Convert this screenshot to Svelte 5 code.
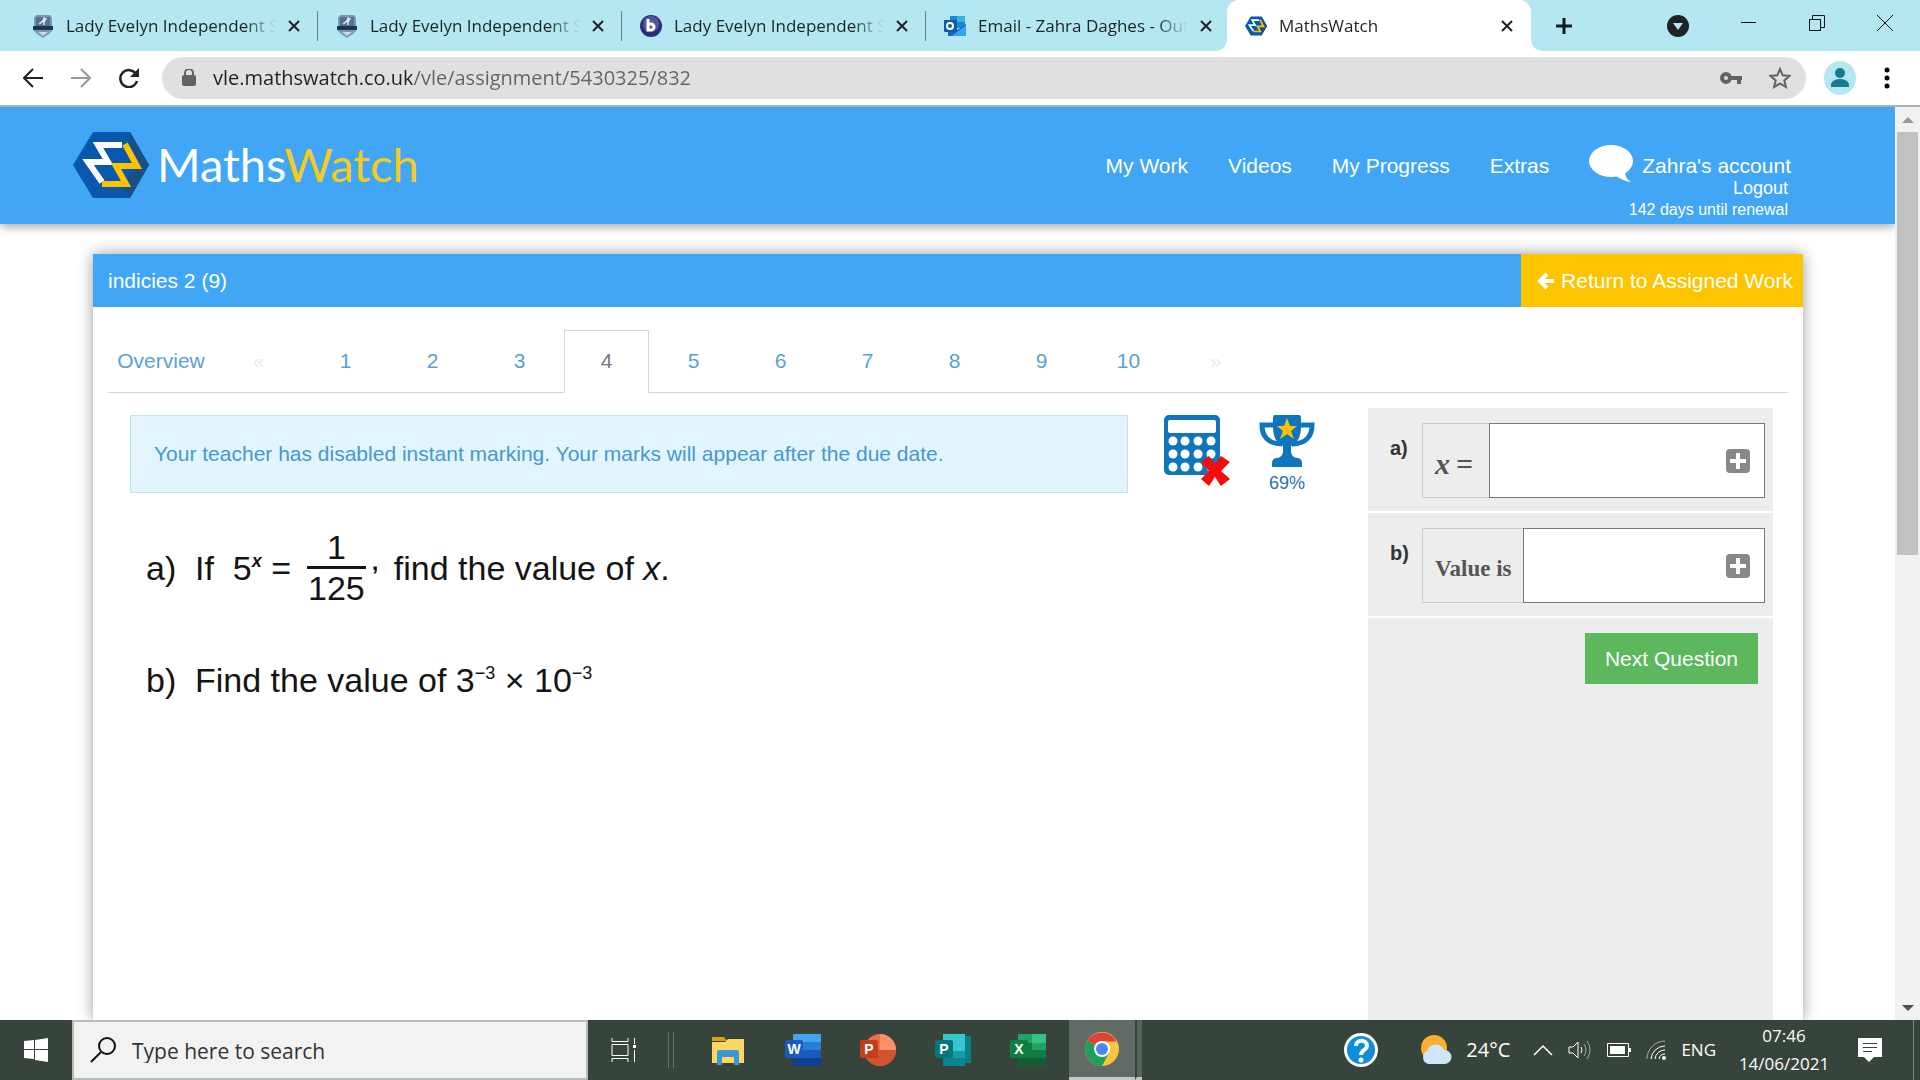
<script>
  const browserTabs = [
    { icon: 'crest', title: 'Lady Evelyn Independent School' },
    { icon: 'crest', title: 'Lady Evelyn Independent School' },
    { icon: 'bbb', title: 'Lady Evelyn Independent School' },
    { icon: 'outlook', title: 'Email - Zahra Daghes - Outlook' },
    { icon: 'maths', title: 'MathsWatch', active: true }
  ];

  const navLinks = ['My Work', 'Videos', 'My Progress', 'Extras'];
  const questions = [1, 2, 3, 4, 5, 6, 7, 8, 9, 10];
  const current = 4;

  const calcRows = [26, 39, 52];
  const calcCols = [9, 21, 34, 47];

  let url = 'vle.mathswatch.co.uk/vle/assignment/5430325/832';
  let search = '';
  let answerA = '';
  let answerB = '';
</script>

{#snippet mathsLogo()}
  <path d="M20 0h37l19 33-19 33H20L0 33z" fill="#0859ad" />
  <path d="M57 0l19 33-19 33-8-11 14-21-7-24z" fill="#174f86" />
  <path d="M49 13H25l10 17H15l14 20" fill="none" stroke="#fff" stroke-width="6" />
  <path d="M52 12l12 22H43l10 18H29" fill="none" stroke="#fdc300" stroke-width="6" />
{/snippet}

{#snippet officeBadge(letter, color)}
  <rect x="0" y="8" width="18" height="18" rx="2" fill={color} />
  <text x="9" y="22" class="badge-letter">{letter}</text>
{/snippet}

{#snippet plusIcon()}
  <svg width="24" height="24" viewBox="0 0 24 24">
    <rect width="24" height="24" rx="4" fill="#888" />
    <path d="M12 4v16M4 12h16" stroke="#fff" stroke-width="4" />
  </svg>
{/snippet}

<div class="screen">
  <div class="tab-strip">
    {#each browserTabs as tab}
      <div class="browser-tab" class:active={tab.active}>
        <svg class="favicon" width="22" height="24" viewBox="0 0 22 24">
          {#if tab.icon === 'crest'}
            <path d="M4 1h14l2 3v13l-3 3-6 4-6-4-3-3V4z" fill="#7c97ae" />
            <path d="M4 3h14v9H4z" fill="#55718d" />
            <path d="M1 12h20v4H1z" fill="#1d3453" />
            <path d="M6 18h10l-5 4z" fill="#c3d9e8" />
            <path d="M7 10l4-3 1-3 2 1-2 3v3" fill="none" stroke="#e4edf4" stroke-width="1.500" />
          {:else if tab.icon === 'bbb'}
            <circle cx="11" cy="12" r="11" fill="#2b2f7b" />
            <circle cx="11" cy="10" r="8" fill="#50559f" />
            <path d="M8 5v11h3a3 3 0 1 0 0-6H8" fill="none" stroke="#fff" stroke-width="3" />
          {:else if tab.icon === 'outlook'}
            <path d="M6 2h15v12H6z" fill="#1a86d9" />
            <path d="M13 2h8v6h-8z" fill="#35b1ea" />
            <path d="M4 12l9 4 9-6v12H4z" fill="#1467b8" />
            <path d="M22 11v11H8z" fill="#35a5e8" />
            <rect x="0" y="6" width="13" height="12" rx="1" fill="#0c5cab" />
            <circle cx="6" cy="12" r="3" fill="none" stroke="#fff" stroke-width="2" />
          {:else}
            <svg width="22" height="24" viewBox="0 -8 76 82">{@render mathsLogo()}</svg>
          {/if}
        </svg>
        <span class="tab-title">{tab.title}</span>
        <button class="icon-btn" aria-label="Close tab">
          <svg width="16" height="16" viewBox="0 0 16 16">
            <path d="M3 3l10 10M13 3L3 13" stroke="#1b2226" stroke-width="2" />
          </svg>
        </button>
      </div>
    {/each}
    <button class="icon-btn new-tab" aria-label="New tab">
      <svg width="18" height="18" viewBox="0 0 18 18">
        <path d="M9 1v16M1 9h16" stroke="#15191c" stroke-width="3" />
      </svg>
    </button>
    <div class="window-buttons">
      <button class="icon-btn" aria-label="Search tabs">
        <svg width="22" height="22" viewBox="0 0 22 22">
          <circle cx="11" cy="11" r="11" fill="#1f2326" />
          <path d="M6 8h10l-5 7z" fill="#b5e7f2" />
        </svg>
      </button>
      <button class="icon-btn" aria-label="Minimise">
        <svg width="16" height="16" viewBox="0 0 16 16"><path d="M0 7.500h15" stroke="#111" /></svg>
      </button>
      <button class="icon-btn" aria-label="Restore">
        <svg width="16" height="16" viewBox="0 0 16 16">
          <path d="M.5 4.500h11v11H.5zM3.500 4.500v-4h12v12h-4" fill="none" stroke="#111" />
        </svg>
      </button>
      <button class="icon-btn" aria-label="Close window">
        <svg width="16" height="16" viewBox="0 0 16 16"><path d="M0 0l16 16M16 0L0 16" stroke="#111" /></svg>
      </button>
    </div>
  </div>

  <div class="toolbar">
    <div class="history">
      <button class="icon-btn" aria-label="Back">
        <svg width="20" height="20" viewBox="0 0 20 20">
          <path d="M20 10H2M10 1l-9 9 9 9" fill="none" stroke="#222" stroke-width="2" />
        </svg>
      </button>
      <button class="icon-btn" aria-label="Forward">
        <svg width="20" height="20" viewBox="0 0 20 20">
          <path d="M0 10h18M10 1l9 9-9 9" fill="none" stroke="#999" stroke-width="2" />
        </svg>
      </button>
      <button class="icon-btn" aria-label="Reload">
        <svg width="20" height="20" viewBox="0 0 20 20">
          <path d="M17 6a8.500 8.500 0 1 0 1 7" fill="none" stroke="#222" stroke-width="2.500" />
          <path d="M20 0v9h-9z" fill="#222" />
        </svg>
      </button>
    </div>
    <div class="omnibox">
      <svg width="14" height="18" viewBox="0 0 14 18">
        <rect y="6" width="14" height="11" rx="2" fill="#5f6368" />
        <path d="M3 7V4a4 4 0 0 1 8 0v3" fill="none" stroke="#5f6368" stroke-width="2" />
      </svg>
      <input class="url" type="text" aria-label="Address" bind:value={url} />
      <button class="icon-btn" aria-label="Passwords">
        <svg width="22" height="14" viewBox="0 0 22 14">
          <circle cx="6" cy="7" r="4" fill="none" stroke="#5f6368" stroke-width="4" />
          <path d="M10 5h12v4h-1v4h-4V9h-7z" fill="#5f6368" />
        </svg>
      </button>
      <button class="icon-btn" aria-label="Bookmark">
        <svg width="22" height="22" viewBox="0 0 22 22">
          <path d="M11 2l2.700 6.300 6.800.6-5.200 4.500 1.600 6.600-5.900-3.500L5.100 20l1.600-6.600L1.500 8.900l6.800-.6z" fill="none" stroke="#5f6368" stroke-width="2" />
        </svg>
      </button>
    </div>
    <button class="icon-btn profile" aria-label="Profile">
      <svg width="32" height="34" viewBox="0 0 32 34">
        <ellipse cx="16" cy="17" rx="16" ry="17" fill="#b5e7f2" />
        <circle cx="16" cy="12" r="5" fill="#147a8c" />
        <path d="M7 26v-2c0-4 5-6 9-6s9 2 9 6v2z" fill="#147a8c" />
      </svg>
    </button>
    <button class="icon-btn" aria-label="Menu">
      <svg width="6" height="22" viewBox="0 0 6 22">
        <circle cx="3" cy="3" r="2.500" /><circle cx="3" cy="11" r="2.500" /><circle cx="3" cy="19" r="2.500" />
      </svg>
    </button>
  </div>

  <div class="viewport">
    <div class="page">
      <header>
        <a class="brand" href="#home">
          <svg width="76" height="66" viewBox="0 0 76 66">{@render mathsLogo()}</svg>
          <span>Maths<b>Watch</b></span>
        </a>
        <nav>
          {#each navLinks as link}
            <a href="#{link}">{link}</a>
          {/each}
          <div class="account">
            <a class="account-link" href="#account">
              <svg width="44" height="38" viewBox="0 0 44 38">
                <ellipse cx="22" cy="16" rx="22" ry="16" fill="#fff" />
                <path d="M22 30c6 0 10 6 20 7-5-3-6-7-6-12z" fill="#fff" />
              </svg>
              Zahra's account
            </a>
            <a class="logout" href="#logout">Logout</a>
            <span class="renewal">142 days until renewal</span>
          </div>
        </nav>
      </header>

      <main>
        <div class="card-head">
          <span>indicies 2 (9)</span>
          <a class="return" href="#assigned">
            <svg width="18" height="18" viewBox="0 0 18 18">
              <path d="M17 9H4M10 2L3 9l7 7" fill="none" stroke="#fff" stroke-width="4" />
            </svg>
            Return to Assigned Work
          </a>
        </div>

        <div class="question-tabs">
          <a class="overview" href="#overview">Overview</a>
          <span class="step">«</span>
          {#each questions as n}
            <a href="#q{n}" class:current={n === current}>{n}</a>
          {/each}
          <span class="step">»</span>
        </div>

        <div class="work">
          <section class="question">
            <div class="info">
              <p class="alert">Your teacher has disabled instant marking. Your marks will appear after the due date.</p>
              <svg width="66" height="72" viewBox="0 0 66 72">
                <rect width="56" height="60" rx="5" fill="#0f75bd" />
                <rect x="4" y="5" width="48" height="13" rx="2" fill="#fff" />
                {#each calcRows as y}
                  {#each calcCols as x}
                    <circle cx={x} cy={y} r="4.500" fill="#fff" />
                  {/each}
                {/each}
                <path d="M37 47l8-6 6 8 6-8 9 6-9 9 9 8-9 7-6-9-6 9-8-7 8-8z" fill="#f60b0b" />
              </svg>
              <div class="score">
                <svg width="56" height="52" viewBox="0 0 56 52">
                  <path d="M14 10H3c0 11 6 19 20 19M42 10h11c0 11-6 19-20 19" fill="none" stroke="#0f75bd" stroke-width="5" />
                  <path d="M14 2q0-2 2-2h24q2 0 2 2v10c0 9-3 16-10 19v6q1 6 7 6 4 1 4 5v4H13v-4q0-4 4-5 6 0 7-6v-6C17 28 14 21 14 12z" fill="#0f75bd" />
                  <path d="M28 3l3 8h7l-6 5 3 8-7-5-7 5 3-8-6-5h7z" fill="#fdc300" />
                </svg>
                <span>69%</span>
              </div>
            </div>

            <div class="maths">
              <span class="part">a)</span>
              <span>If&nbsp; 5<sup class="power">x</sup> =</span>
              <span class="fraction"><span>1</span><span class="denominator">125</span></span>
              <span class="comma">,</span>
              <span>find the value of <i>x</i>.</span>
            </div>
            <div class="maths">
              <span class="part">b)</span>
              <span>Find the value of 3<sup>−3</sup> × 10<sup>−3</sup></span>
            </div>
          </section>

          <aside>
            <div class="answer">
              <strong>a)</strong>
              <div class="field">
                <label class="symbol" for="answer-a"><i>x</i>&thinsp;=</label>
                <input id="answer-a" type="text" bind:value={answerA} />
                <button class="icon-btn keypad" aria-label="Open keypad for a">{@render plusIcon()}</button>
              </div>
            </div>
            <div class="answer">
              <strong>b)</strong>
              <div class="field">
                <label for="answer-b">Value is</label>
                <input id="answer-b" type="text" bind:value={answerB} />
                <button class="icon-btn keypad" aria-label="Open keypad for b">{@render plusIcon()}</button>
              </div>
            </div>
            <button class="next">Next Question</button>
          </aside>
        </div>
      </main>
    </div>

    <div class="scrollbar">
      <svg width="12" height="6" viewBox="0 0 12 6"><path d="M0 6l6-6 6 6z" fill="#999" /></svg>
      <div class="track"><div class="thumb"></div></div>
      <svg width="12" height="6" viewBox="0 0 12 6"><path d="M0 0l6 6 6-6z" fill="#505050" /></svg>
    </div>
  </div>

  <footer>
    <button class="icon-btn start" aria-label="Start">
      <svg width="24" height="24" viewBox="0 0 24 24" fill="#fff">
        <path d="M0 3l10-1v9H0zM11 2l13-2v11H11zM0 12h10v9L0 20zM11 12h13v12l-13-2z" />
      </svg>
    </button>
    <label class="search">
      <svg width="26" height="26" viewBox="0 0 26 26">
        <circle cx="17" cy="9" r="8" fill="none" stroke="#111" stroke-width="2" />
        <path d="M11 15L1 25" stroke="#111" stroke-width="2" />
      </svg>
      <input type="text" placeholder="Type here to search" aria-label="Search" bind:value={search} />
    </label>
    <button class="icon-btn task-view" aria-label="Task view">
      <svg width="26" height="24" viewBox="0 0 26 24" fill="none" stroke="#fff">
        <path d="M1 6.500h16v11H1zM1 0v3.500h16V0M1 24v-3.500h16V24M23.500 0v6M23.500 12v12" />
        <path d="M22 7h3v3h-3z" fill="#fff" stroke="none" />
      </svg>
    </button>
    <span class="grip"></span>

    <div class="apps">
      <button class="icon-btn" aria-label="File Explorer">
        <svg width="36" height="36" viewBox="0 0 36 36">
          <path d="M2 5h12l3 4H2z" fill="#d9a114" />
          <path d="M2 10h13l3-3h16v24H2z" fill="#fdd663" />
          <path d="M7 33V20q0-2 2-2h18q2 0 2 2v13h-5v-8H12v8z" fill="#3c97d3" />
        </svg>
      </button>
      <button class="icon-btn" aria-label="Word">
        <svg width="36" height="36" viewBox="0 0 36 36">
          <path d="M8 2h28v9H8z" fill="#41a5ee" /><path d="M8 10h28v8H8z" fill="#2b7cd3" />
          <path d="M8 18h28v8H8z" fill="#185abd" /><path d="M8 26h28v8H8z" fill="#103f91" />
          {@render officeBadge('W', '#185abd')}
        </svg>
      </button>
      <button class="icon-btn" aria-label="PowerPoint">
        <svg width="36" height="36" viewBox="0 0 36 36">
          <circle cx="20" cy="18" r="16" fill="#ed6c47" />
          <path d="M20 2a16 16 0 0 1 16 16H20z" fill="#ff8f6b" />
          <path d="M4 18h32a16 16 0 0 1-32 0z" fill="#d35230" />
          {@render officeBadge('P', '#c43e1c')}
        </svg>
      </button>
      <button class="icon-btn" aria-label="Publisher">
        <svg width="36" height="36" viewBox="0 0 36 36">
          <path d="M28 4h8v27h-8z" fill="#038387" />
          <path d="M8 2h22v17H8z" fill="#37c6d0" /><path d="M8 19h22v7H8z" fill="#1a9ba1" />
          <path d="M8 26h22v8H8z" fill="#04888f" />
          {@render officeBadge('P', '#03787c')}
        </svg>
      </button>
      <button class="icon-btn" aria-label="Excel">
        <svg width="36" height="36" viewBox="0 0 36 36">
          <path d="M8 2h14v9H8z" fill="#21a366" /><path d="M22 2h14v9H22z" fill="#33c481" />
          <path d="M8 11h14v7H8z" fill="#107c41" /><path d="M22 11h14v7H22z" fill="#21a366" />
          <path d="M8 18h28v8H8z" fill="#107c41" /><path d="M8 26h28v8H8z" fill="#185c37" />
          {@render officeBadge('X', '#107c41')}
        </svg>
      </button>
    </div>
    <button class="icon-btn chrome" aria-label="Chrome">
      <svg width="34" height="34" viewBox="0 0 34 34">
        <circle cx="17" cy="17" r="17" fill="#f9c440" />
        <path d="M17 17L2.300 8.500A17 17 0 0 0 17 34l7-13z" fill="#1fa05b" />
        <path d="M17 17L2.300 8.500A17 17 0 0 1 31.700 9.500H17z" fill="#db4437" />
        <circle cx="17" cy="17" r="8" fill="#fff" />
        <circle cx="17" cy="17" r="6" fill="#4a86ec" />
      </svg>
    </button>
    <span class="stack"></span>

    <div class="tray">
      <button class="icon-btn help" aria-label="Help">
        <svg width="34" height="34" viewBox="0 0 34 34">
          <circle cx="17" cy="17" r="17" fill="#fff" /><circle cx="17" cy="17" r="14" fill="#0c8fd6" />
          <path d="M12 13c0-7 11-7 11 0 0 4-6 4-6 9" fill="none" stroke="#fff" stroke-width="4" />
          <circle cx="17" cy="27" r="2.500" fill="#fff" />
        </svg>
      </button>
      <svg width="32" height="30" viewBox="0 0 32 30">
        <circle cx="14" cy="13" r="13" fill="#fbb02d" />
        <path d="M8 29a7 7 0 0 1-1-13 9 9 0 0 1 17-1 7 7 0 0 1 1 14z" fill="#cfe6fa" />
      </svg>
      <span class="temperature">24°C</span>
      <div class="status">
        <svg width="20" height="12" viewBox="0 0 20 12"><path d="M1 11l9-9 9 9" fill="none" stroke="#fff" stroke-width="1.500" /></svg>
        <svg width="24" height="20" viewBox="0 0 24 20" fill="none" stroke="#fff">
          <path d="M1 7h4l5-5v16l-5-5H1zM13 7q2 3 0 6" />
          <path d="M16 4q4 6 0 12M19 1q6 9 0 18" stroke="#a3aaa5" />
        </svg>
        <svg width="24" height="14" viewBox="0 0 24 14">
          <path d="M.5.500h21v13H.5z" fill="none" stroke="#fff" /><path d="M3 3h15v8H3zM22 5h2v4h-2z" fill="#fff" />
        </svg>
        <svg width="20" height="20" viewBox="0 0 20 20" fill="none" stroke="#fff">
          <path d="M1 19A18 18 0 0 1 19 1" stroke="#a3aaa5" />
          <path d="M5 19A14 14 0 0 1 19 6M9 19a10 10 0 0 1 10-9M13 19a6 6 0 0 1 6-5" />
          <circle cx="18" cy="18" r="2" fill="#fff" stroke="none" />
        </svg>
        <span>ENG</span>
      </div>
      <div class="clock"><span>07:46</span><span>14/06/2021</span></div>
      <button class="icon-btn notices" aria-label="Notifications">
        <svg width="24" height="24" viewBox="0 0 24 24">
          <path d="M0 0h24v19h-8l-5 5-5-5H0z" fill="#fff" />
          <path d="M5 5.500h14M5 9.500h14M5 13.500h9" stroke="#36443b" />
        </svg>
      </button>
    </div>
  </footer>
</div>

<style>
  :global(body) {
    margin: 0;
    background: #fff;
  }

  .screen {
    display: flex;
    flex-direction: column;
    height: 100vh;
    font-family: 'Liberation Sans', Arial, sans-serif;
    font-size: 21px;
    line-height: 24px;
  }

  .screen * {
    box-sizing: border-box;
  }

  svg {
    display: block;
    flex: none;
  }

  a {
    color: inherit;
    text-decoration: none;
  }

  input {
    min-width: 0;
    border: 0;
    padding: 0;
    background: none;
    outline: none;
    font: inherit;
  }

  .icon-btn {
    display: flex;
    align-items: center;
    justify-content: center;
    flex: none;
    border: 0;
    padding: 0;
    background: none;
  }

  /* browser chrome */
  .tab-strip {
    display: flex;
    flex: none;
    height: 51px;
    padding-left: 14px;
    background: #b5e7f2;
    font-family: 'Open Sans', 'Noto Sans', sans-serif;
    font-size: 17px;
    color: #1b2226;
  }

  .browser-tab {
    display: flex;
    position: relative;
    align-items: center;
    flex: 0 1 304px;
    min-width: 0;
    padding: 0 16px 0 18px;
    background: linear-gradient(#5d8791, #5d8791) right center / 1px 30px no-repeat;
  }

  .browser-tab:nth-child(4) {
    background: none;
  }

  .browser-tab.active {
    margin-left: -3px;
    border-radius: 12px 12px 0 0;
    background: #fff;
  }

  /* outward curves at the foot of the open tab */
  .browser-tab.active::before,
  .browser-tab.active::after {
    content: '';
    position: absolute;
    bottom: 0;
    width: 10px;
    height: 10px;
  }

  .browser-tab.active::before {
    right: 100%;
    background: radial-gradient(circle at 0 0, transparent 9px, #fff 10px);
  }

  .browser-tab.active::after {
    left: 100%;
    background: radial-gradient(circle at 100% 0, transparent 9px, #fff 10px);
  }

  .tab-title {
    flex: 1;
    min-width: 0;
    margin: 0 10px 0 12px;
    overflow: hidden;
    white-space: nowrap;
    mask-image: linear-gradient(90deg, #000 85%, transparent);
  }

  .new-tab {
    width: 66px;
  }

  .window-buttons {
    display: flex;
    align-items: center;
    gap: 52px;
    margin-left: auto;
    padding: 0 27px 6px 0;
  }

  .window-buttons .icon-btn:first-child {
    padding-top: 6px;
  }

  .toolbar {
    display: flex;
    align-items: center;
    flex: none;
    gap: 18px;
    height: 56px;
    padding: 0 30px 0 23px;
    border-bottom: 2px solid #a9b0b8;
    background: #fff;
  }

  .history {
    display: flex;
    gap: 28px;
    margin-right: 5px;
  }

  .omnibox {
    display: flex;
    align-items: center;
    flex: 1;
    gap: 17px;
    height: 42px;
    padding: 0 15px 0 20px;
    border-radius: 21px;
    background: #e0e0e0;
  }

  .omnibox .icon-btn + .icon-btn {
    margin-left: 10px;
  }

  .profile {
    margin-right: 10px;
  }

  /* host name dark, path grey */
  .url {
    flex: 1;
    background: linear-gradient(90deg, #202124 199px, #5f6368 199px) text;
    color: transparent;
    font-family: 'Open Sans', 'Noto Sans', sans-serif;
    font-size: 20px;
    line-height: 28px;
  }

  /* web page */
  .viewport {
    display: flex;
    flex: 1;
    min-height: 0;
    overflow: hidden;
  }

  .page {
    display: flex;
    flex-direction: column;
    flex: 1;
    min-width: 0;
  }

  header {
    display: flex;
    justify-content: space-between;
    flex: none;
    height: 117px;
    padding: 25px 104px 0 73px;
    background: #40a6f5;
    box-shadow: 0 2px 10px rgba(0, 0, 0, 0.4);
    color: #fff;
  }

  .brand {
    display: flex;
    gap: 8px;
    height: 66px;
    font-family: Lato, sans-serif;
    font-size: 47px;
    line-height: 64px;
  }

  .brand b {
    color: #f5cb20;
    font-weight: 400;
  }

  nav {
    display: flex;
    gap: 40px;
    padding-top: 22px;
  }

  .account {
    display: flex;
    flex-direction: column;
    align-items: flex-end;
    line-height: 22px;
  }

  .account-link {
    display: flex;
    gap: 9px;
    height: 23px;
    line-height: 24px;
  }

  .account-link svg {
    margin-top: -9px;
  }

  .logout {
    padding-right: 3px;
    font-size: 18px;
  }

  .renewal {
    padding-right: 3px;
    font-size: 16px;
  }

  main {
    display: flex;
    flex-direction: column;
    flex: 1;
    min-height: 0;
    margin: 30px 92px 0 93px;
    background: #fff;
    box-shadow: 0 0 14px rgba(0, 0, 0, 0.4);
  }

  .card-head {
    display: flex;
    align-items: center;
    justify-content: space-between;
    flex: none;
    height: 53px;
    padding-left: 15px;
    background: #40a6f5;
    color: #fff;
  }

  .return {
    display: flex;
    align-items: center;
    gap: 6px;
    height: 53px;
    padding: 0 10px 0 16px;
    background: #fdc400;
  }

  .question-tabs {
    display: flex;
    flex: none;
    gap: 2px;
    margin: 23px 15px 0;
    border-bottom: 1px solid #d5d5d5;
    color: #5a9fda;
    text-align: center;
  }

  .question-tabs > * {
    width: 85px;
    height: 63px;
    margin-bottom: -1px;
    border: 1px solid transparent;
    line-height: 60px;
  }

  .question-tabs .overview {
    width: 106px;
  }

  .question-tabs .step {
    color: #ececec;
  }

  .question-tabs .current {
    border-color: #d5d5d5;
    border-bottom-color: #fff;
    color: #777;
  }

  .work {
    display: flex;
    flex: 1;
    justify-content: space-between;
    min-height: 0;
    padding: 15px 30px 0 37px;
  }

  .question {
    flex: 1;
  }

  .info {
    display: flex;
    align-items: flex-start;
    margin: 0 53px 7px 0;
    padding-top: 7px;
  }

  .alert {
    flex: 1;
    margin: 0 36px 0 0;
    padding: 26px 23px;
    border: 1px solid #bfe3ee;
    background: #e2f4fd;
    color: #4599d0;
  }

  .score {
    display: flex;
    flex-direction: column;
    align-items: center;
    gap: 4px;
    margin-left: 29px;
    color: #2a72b0;
    font-size: 18px;
  }

  .maths {
    display: flex;
    align-items: center;
    height: 112px;
    padding: 19px 0 0 16px;
    font-size: 34px;
    line-height: 38px;
    color: #141414;
    white-space: pre;
  }

  .part {
    width: 49px;
  }

  sup {
    font-size: 18px;
    line-height: 18px;
    vertical-align: 13px;
  }

  .power {
    font-style: italic;
    font-weight: bold;
  }

  .fraction {
    display: flex;
    flex-direction: column;
    align-items: center;
    margin-left: 16px;
  }

  .denominator {
    padding: 0 1px;
    border-top: 3px solid #141414;
  }

  .comma {
    width: 22px;
    margin-left: 6px;
    padding-bottom: 12px;
    font-size: 24px;
    font-weight: bold;
  }

  aside {
    width: 405px;
    background: #ededed;
  }

  .answer {
    display: flex;
    height: 105px;
    padding: 15px 8px 0 22px;
    border-bottom: 2px solid #fff;
  }

  .answer strong {
    flex: none;
    width: 32px;
    padding-top: 13px;
    color: #333;
    font-size: 20px;
  }

  .field {
    display: flex;
    position: relative;
    flex: 1;
    min-width: 0;
    height: 75px;
  }

  .field label {
    flex: none;
    padding: 28px 12px 0;
    border: 1px solid #ccc;
    border-right: 0;
    color: #555;
    font-family: 'Liberation Serif', 'Times New Roman', serif;
    font-size: 23px;
    font-weight: bold;
  }

  .field .symbol {
    padding-right: 16px;
    font-size: 30px;
  }

  .field input {
    flex: 1;
    width: 0;
    padding: 0 44px 0 10px;
    border: 1px solid #777;
    background: #fff;
  }

  .keypad {
    position: absolute;
    top: 26px;
    right: 15px;
  }

  .next {
    display: block;
    height: 51px;
    margin: 15px 15px 0 auto;
    padding: 0 20px;
    border: 0;
    background: #5cb85c;
    color: #fff;
    font: inherit;
  }

  .scrollbar {
    display: flex;
    flex-direction: column;
    align-items: center;
    gap: 9px;
    width: 25px;
    padding: 10px 0 9px;
    background: #f1f1f1;
  }

  .track {
    flex: 1;
    width: 21px;
  }

  .thumb {
    height: 49%;
    background: #c1c1c1;
  }

  /* taskbar */
  footer {
    display: flex;
    flex: none;
    height: 60px;
    background: #36443b;
    color: #fff;
    font-family: 'Open Sans', 'Noto Sans', sans-serif;
    font-size: 17px;
  }

  .start {
    width: 72px;
  }

  .search {
    display: flex;
    align-items: center;
    gap: 16px;
    width: 516px;
    padding: 0 16px;
    border: 2px solid #b9bdb9;
    background: #f2f2f2;
    font-size: 21px;
  }

  .search input {
    flex: 1;
    padding-top: 2px;
  }

  .search input::placeholder {
    color: #333;
    opacity: 1;
  }

  .task-view {
    width: 72px;
  }

  .grip {
    width: 6px;
    height: 36px;
    margin: 12px 36px 0 8px;
    border: solid #66726b;
    border-width: 0 1px;
  }

  .apps {
    display: flex;
    gap: 39px;
    margin-right: 23px;
  }

  .badge-letter {
    fill: #fff;
    font-size: 14px;
    font-weight: bold;
    text-anchor: middle;
  }

  .chrome {
    width: 66px;
    border-bottom: 3px solid #c3cac6;
    background: #5f6b64;
  }

  .stack {
    width: 7px;
    border-left: 2px solid #36443b;
    border-bottom: 3px solid #c3cac6;
    background: #57635c;
  }

  .tray {
    display: flex;
    align-items: center;
    margin-left: auto;
    padding-right: 6px;
    border-right: 1px solid #7b857f;
    margin-right: 6px;
  }

  .help {
    margin-right: 42px;
  }

  .temperature {
    margin: 0 23px 0 14px;
    font-size: 20px;
  }

  .status {
    display: flex;
    align-items: center;
    gap: 15px;
  }

  .clock {
    display: flex;
    flex-direction: column;
    align-items: center;
    gap: 4px;
    width: 136px;
  }

  .notices {
    margin: 0 25px 0 6px;
  }
</style>
